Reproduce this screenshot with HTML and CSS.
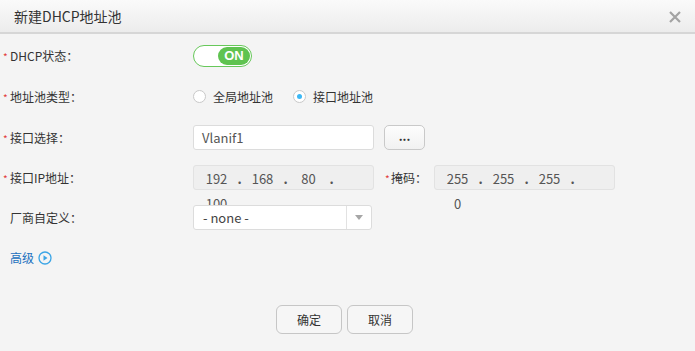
FILE: index.html
```html
<!doctype html>
<html lang="zh-CN">
<head>
    <meta charset="UTF-8">
    <title>新建DHCP地址池</title>
    <link rel="stylesheet" href="styles.css">
</head>
<body>
<div class="dialog">
    <div class="dialog-header">
        <span class="dialog-title">新建DHCP地址池</span>
        <a class="dialog-close" href="#">
            <svg width="12" height="12" viewBox="0 0 12 12">
                <path d="M1 1 L11 11 M11 1 L1 11" stroke="#a3a3a3" stroke-width="2.2" fill="none"/>
            </svg>
        </a>
    </div>
    <div class="dialog-body">
        <div class="row">
            <label class="row-label"><i class="req">*</i>DHCP状态：</label>
            <div class="row-field">
                <span class="switch"><span class="switch-on">ON</span></span>
            </div>
        </div>
        <div class="row row-radio">
            <label class="row-label"><i class="req">*</i>地址池类型：</label>
            <div class="row-field">
                <span class="radio"></span><span class="radio-text">全局地址池</span>
                <span class="radio checked"></span><span class="radio-text">接口地址池</span>
            </div>
        </div>
        <div class="row">
            <label class="row-label"><i class="req">*</i>接口选择：</label>
            <div class="row-field">
                <div class="input">Vlanif1</div>
                <button class="btn-more">...</button>
            </div>
        </div>
        <div class="row">
            <label class="row-label"><i class="req">*</i>接口IP地址：</label>
            <div class="row-field">
                <div class="ip-box">
                    <span class="ip-seg">192</span><span class="ip-dot">.</span>
                    <span class="ip-seg">168</span><span class="ip-dot">.</span>
                    <span class="ip-seg">80</span><span class="ip-dot">.</span>
                    <span class="ip-seg">100</span>
                </div>
                <label class="sub-label"><i class="req">*</i>掩码：</label>
                <div class="ip-box">
                    <span class="ip-seg">255</span><span class="ip-dot">.</span>
                    <span class="ip-seg">255</span><span class="ip-dot">.</span>
                    <span class="ip-seg">255</span><span class="ip-dot">.</span>
                    <span class="ip-seg">0</span>
                </div>
            </div>
        </div>
        <div class="row">
            <label class="row-label row-label-plain">厂商自定义：</label>
            <div class="row-field">
                <div class="select">
                    <span class="select-text">- none -</span>
                    <span class="select-arrow"></span>
                </div>
            </div>
        </div>
        <div class="row">
            <a class="advanced" href="#">高级
                <svg width="14" height="14" viewBox="0 0 14 14">
                    <circle cx="7" cy="7" r="6" stroke="#3ba5e6" stroke-width="1.3" fill="none"/>
                    <path d="M5.5 4.2 L9.5 7 L5.5 9.8 Z" fill="#3ba5e6"/>
                </svg>
            </a>
        </div>
        <div class="footer">
            <button class="btn">确定</button>
            <button class="btn">取消</button>
        </div>
    </div>
</div>
</body>
</html>
```

FILE: styles.css
```css
html, body {
    margin: 0;
    padding: 0;
    width: 100%;
    height: 100%;
    overflow: hidden;
}

body {
    font-family: "Noto Sans CJK SC", "Noto Sans", sans-serif;
    font-size: 12px;
    color: #333;
    background: #f4f4f4;
}

.dialog {
    height: 100%;
    background: #f4f4f4;
}

.dialog-header {
    height: 32px;
    display: flex;
    align-items: center;
    justify-content: space-between;
    padding: 0 14px 0 14px;
    background: linear-gradient(#fafafa, #ececec);
    border-bottom: 2px solid #d6d6d6;
}

.dialog-title {
    font-size: 14px;
    color: #333;
}

.dialog-close {
    display: flex;
    padding-top: 1px;
}

.dialog-body {
    padding-top: 9px;
}

.row {
    display: flex;
    align-items: center;
    height: 25px;
    margin-bottom: 15px;
}

.row-radio {
    height: 27px;
}

.row-label {
    width: 193px;
    flex: none;
    padding-left: 3px;
    box-sizing: border-box;
    white-space: nowrap;
}

.row-label-plain {
    padding-left: 10px;
}

.req {
    font-style: normal;
    color: #e23b3b;
    font-size: 10px;
    display: inline-block;
    width: 7px;
}

.row-field {
    display: flex;
    align-items: center;
}

.switch {
    width: 55px;
    height: 18px;
    border: 1px solid #67c85a;
    border-radius: 11px;
    background: #fff;
    display: flex;
    justify-content: flex-end;
    align-items: center;
    padding: 1px;
}

.switch-on {
    width: 32px;
    height: 18px;
    border-radius: 10px;
    background: #5fc350;
    color: #fff;
    font-size: 13px;
    font-weight: bold;
    line-height: 18px;
    text-align: center;
    font-family: "Liberation Sans", sans-serif;
}

.radio {
    width: 11px;
    height: 11px;
    border: 1px solid #c9c9c9;
    border-radius: 50%;
    background: #fff;
    position: relative;
    margin-right: 7px;
}

.radio.checked::after {
    content: "";
    position: absolute;
    left: 3px;
    top: 3px;
    width: 5px;
    height: 5px;
    border-radius: 50%;
    background: #3cb8f5;
}

.radio-text {
    margin-right: 20px;
}

.input {
    width: 171px;
    height: 23px;
    line-height: 23px;
    border: 1px solid #dcdcdc;
    border-radius: 3px;
    background: #fff;
    padding-left: 8px;
    color: #555;
    font-size: 13px;
}

.btn-more {
    margin-left: 10px;
    width: 41px;
    height: 25px;
    border: 1px solid #c9c9c9;
    border-radius: 5px;
    background: linear-gradient(#fdfdfd, #f1f1f1);
    font-family: inherit;
    font-size: 12px;
    font-weight: bold;
    color: #333;
    padding: 0 0 4px;
}

.ip-box {
    width: 181px;
    height: 25px;
    box-sizing: border-box;
    border: 1px solid #e2e2e2;
    border-radius: 3px;
    background: #efefef;
    padding: 0 8px 0 7px;
    display: flex;
    flex-wrap: wrap;
    align-content: flex-start;
    color: #555;
    font-size: 13px;
}

.ip-seg {
    width: 31px;
    height: 25px;
    line-height: 25px;
    text-align: center;
}

.ip-dot {
    width: 15px;
    height: 25px;
    line-height: 25px;
    text-align: center;
    font-weight: bold;
}

.sub-label {
    margin-left: 11px;
    width: 49px;
    white-space: nowrap;
    font-size: 12px;
}

.sub-label .req {
    width: 6px;
}

.select {
    position: relative;
    width: 179px;
    height: 25px;
    box-sizing: border-box;
    border: 1px solid #dcdcdc;
    border-radius: 3px;
    background: #fff;
    display: flex;
    align-items: center;
}

.select-text {
    flex: 1;
    padding-left: 9px;
    color: #444;
    font-size: 13px;
}

.select-arrow {
    width: 24px;
    height: 23px;
    border-left: 1px solid #e2e2e2;
    display: flex;
    align-items: center;
    justify-content: center;
}

.select-arrow::before {
    content: "";
    border-left: 4px solid transparent;
    border-right: 4px solid transparent;
    border-top: 5px solid #a6a6a6;
}

.advanced {
    margin-left: 10px;
    color: #2270be;
    text-decoration: none;
    display: flex;
    align-items: center;
    gap: 4px;
    font-size: 12px;
}

.footer {
    display: flex;
    justify-content: center;
    gap: 5px;
    padding-top: 20px;
    padding-right: 6px;
}

.btn {
    width: 66px;
    height: 29px;
    border: 1px solid #c6c6c6;
    border-radius: 6px;
    background: #f6f6f6;
    font-family: inherit;
    font-size: 12px;
    color: #333;
}
```
